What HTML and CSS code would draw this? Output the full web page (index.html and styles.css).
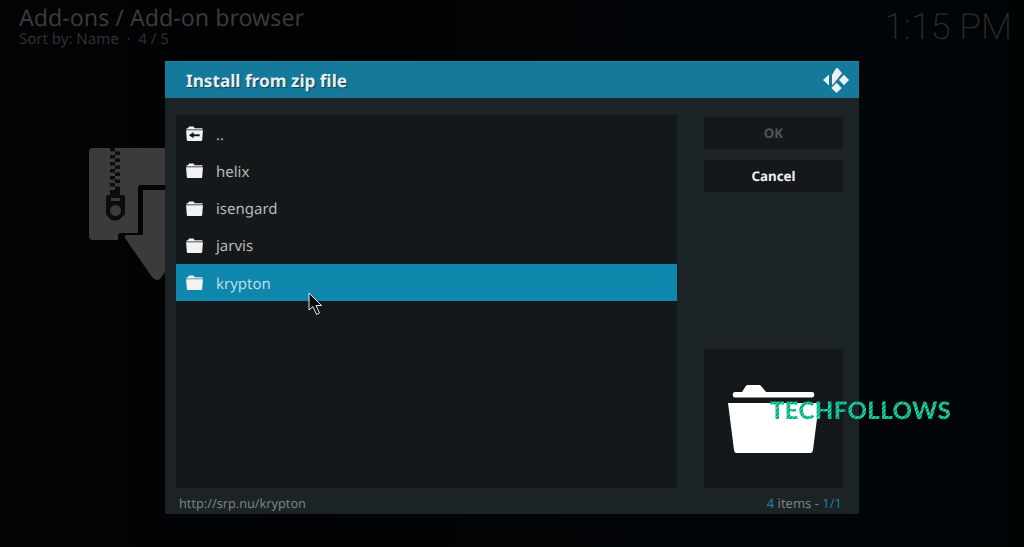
FILE: index.html
```html
<!DOCTYPE html>
<html lang="en">
<head>
<meta charset="utf-8">
<title>Install from zip file</title>
<link rel="stylesheet" href="styles.css">
</head>
<body>
<div class="screen">
  <header class="topbar">
    <div class="crumbs">
      <div class="crumb-title">Add-ons / Add-on browser</div>
      <div class="crumb-sub">Sort by: Name&nbsp; · &nbsp;4 / 5</div>
    </div>
    <div class="clock">1:15 PM</div>
  </header>

  <svg class="zip-art" viewBox="0 0 76 133" aria-hidden="true">
    <path fill="#3b3b3b" d="M4 0H76V37H52Q49 37 49 40V85H32Q29 85 29 88V92H4Q0 92 0 88V4Q0 0 4 0Z"/>
    <path fill="#3b3b3b" d="M56 42H76V124L71 131Q67 134 63 129L36 90Q35 87 38 87H54V42Z"/>
    <g fill="#0c0c0c">
      <path d="M21 0h5v3.500h-5zM26 3.500h5v3.500h-5zM21 7h5v3.500h-5zM26 10.500h5v3.500h-5zM21 14h5v3.500h-5zM26 17.500h5v3.500h-5zM21 21h5v3.500h-5zM26 24.500h5v3.500h-5zM21 28h5v3.500h-5zM26 31.500h5v3.500h-5zM21 35h5v3.500h-5zM26 38.500h5v3.500h-5z"/>
      <path d="M21 42h10v5H21z"/>
      <path fill-rule="evenodd" d="M17 49Q17 47 19 47H34Q36 47 36 49V66L31 71Q26 74 21 71L17 66ZM22 50V53H31V50ZM26.500 57A5.500 5.500 0 1 0 26.510 68 5.500 5.500 0 0 0 26.500 57Z"/>
    </g>
  </svg>

  <section class="dialog">
    <div class="dialog-head">
      <h1 class="dialog-title">Install from zip file</h1>
      <svg class="kodi-logo" viewBox="0 0 26 26" aria-hidden="true">
        <path d="M0 13 6 7.500V18.500Z"/>
        <path d="M9 17.500V8L13 1.500C13.500.8 14.300.8 15 1.300L19 6.200 9.500 18Z"/>
        <path d="M21 7.800 26 13 21 18.200 16 13Z"/>
        <path d="M13.500 15.800 18.700 21 13.500 26 8.300 21Z"/>
      </svg>
    </div>
    <div class="dialog-body">
      <ul class="file-list">
        <li class="file-row">
          <svg class="folder" viewBox="0 0 20 16" aria-hidden="true"><path fill-rule="evenodd" d="M3 2.500 4.200.6H9L10.200 2.500H18.500V3.600H1.500V2.500ZM1 4.600H19L18.200 15C18.100 15.600 17.800 16 17.200 16H2.800C2.200 16 1.900 15.600 1.800 15ZM4 9.800 9 6.500V8.800H15.500V10.800H9V13.100Z"/></svg>
          <span class="file-name">..</span>
        </li>
        <li class="file-row">
          <svg class="folder" viewBox="0 0 20 16" aria-hidden="true"><path d="M3 2.500 4.200.6H9L10.200 2.500H18.500V3.600H1.500V2.500ZM1 4.600H19L18.200 15C18.100 15.600 17.800 16 17.200 16H2.800C2.200 16 1.900 15.600 1.800 15Z"/></svg>
          <span class="file-name">helix</span>
        </li>
        <li class="file-row">
          <svg class="folder" viewBox="0 0 20 16" aria-hidden="true"><path d="M3 2.500 4.200.6H9L10.200 2.500H18.500V3.600H1.500V2.500ZM1 4.600H19L18.200 15C18.100 15.600 17.800 16 17.200 16H2.800C2.200 16 1.900 15.600 1.800 15Z"/></svg>
          <span class="file-name">isengard</span>
        </li>
        <li class="file-row">
          <svg class="folder" viewBox="0 0 20 16" aria-hidden="true"><path d="M3 2.500 4.200.6H9L10.200 2.500H18.500V3.600H1.500V2.500ZM1 4.600H19L18.200 15C18.100 15.600 17.800 16 17.200 16H2.800C2.200 16 1.900 15.600 1.800 15Z"/></svg>
          <span class="file-name">jarvis</span>
        </li>
        <li class="file-row is-selected">
          <svg class="folder" viewBox="0 0 20 16" aria-hidden="true"><path d="M3 2.500 4.200.6H9L10.200 2.500H18.500V3.600H1.500V2.500ZM1 4.600H19L18.200 15C18.100 15.600 17.800 16 17.200 16H2.800C2.200 16 1.900 15.600 1.800 15Z"/></svg>
          <span class="file-name">krypton</span>
        </li>
      </ul>
      <aside class="side">
        <div class="btn is-disabled">OK</div>
        <div class="btn">Cancel</div>
        <div class="thumb">
          <svg class="thumb-folder" viewBox="0 0 92 70" aria-hidden="true"><path d="M14 7 17.500 1.500C18 .6 19 0 20 0H31C32 0 33 .6 33.500 1.500L38 7H84C87 7 87 12.500 84 12.500H7C4 12.500 4 7 7 7ZM0 18H91L85 65C84.700 67.500 83.500 68 81.500 68H9.500C7.500 68 6.300 67.500 6 65Z"/></svg>
        </div>
      </aside>
    </div>
    <footer class="dialog-foot">
      <span class="path">http://srp.nu/krypton</span>
      <span class="count"><b>4</b> items - <b>1/1</b></span>
    </footer>
  </section>

  <svg class="cursor" viewBox="0 0 16 24" aria-hidden="true"><path d="M1 1V18L5 14.500 8.500 22.500 11.500 21 8 13.500H13.500Z" fill="#0b0b0b" stroke="#e8e8e8" stroke-width="1"/></svg>
  <div class="watermark">TECHFOLLOWS</div>
</div>
</body>
</html>
```
FILE: styles.css
```css
* { box-sizing: border-box; }
html, body { margin: 0; height: 100%; }
body {
  background: #000;
  font-family: "Noto Sans", sans-serif;
  text-rendering: geometricPrecision;
  overflow: hidden;
}
.screen {
  position: relative;
  width: 1024px;
  height: 547px;
  overflow: hidden;
  background: linear-gradient(90deg, #020405 0%, #010203 30%, #020608 80%, #010405 100%);
}
.topbar {
  display: flex;
  justify-content: space-between;
  padding: 0 12px 0 19px;
}
.crumb-title {
  font-size: 23.2px;
  line-height: 28px;
  color: #3a3a3a;
  margin-top: 3px;
}
.crumb-sub {
  font-size: 15px;
  line-height: 16px;
  color: #303030;
}
.clock {
  font-family: "Roboto", sans-serif;
  font-weight: 200;
  font-size: 36px;
  line-height: 42px;
  margin-top: 6px;
  color: #2c2c2c;
}
.zip-art {
  position: absolute;
  left: 89px;
  top: 148px;
  width: 76px;
  height: 133px;
}
.dialog {
  position: absolute;
  left: 165px;
  top: 61px;
  width: 694px;
  height: 453px;
  background: #1c2326;
  display: flex;
  flex-direction: column;
}
.dialog-head {
  height: 37px;
  background: #14799b;
  border-top: 1px solid #1a86a8;
  display: flex;
  align-items: center;
  justify-content: space-between;
  padding: 0 10px 0 21px;
}
.dialog-title {
  margin: 2px 0 0;
  font-size: 17.2px;
  font-weight: 700;
  color: #e8eef0;
  text-shadow: 1px 1px 1px rgba(0, 0, 0, .45);
}
.kodi-logo {
  width: 26px;
  height: 26px;
  fill: #e9f1f4;
}
.dialog-body {
  display: flex;
  flex: 1;
  padding: 17px 16px 0 11px;
  gap: 27px;
}
.file-list {
  list-style: none;
  margin: 0;
  padding: 0;
  width: 501px;
  height: 373px;
  background: #14181a;
}
.file-row {
  display: flex;
  align-items: center;
  height: 37.25px;
  padding-left: 9px;
  gap: 12px;
  font-size: 15px;
  color: #b8b8b8;
}
.file-name {
  margin-top: 2px;
}
.file-row.is-selected {
  background: #0f86ab;
  color: #b9dce8;
}
.folder {
  width: 19px;
  height: 15px;
  fill: #f2f2f2;
  flex: none;
}
.side {
  display: flex;
  flex-direction: column;
  width: 139px;
  padding-top: 2px;
  gap: 11px;
}
.btn {
  height: 32px;
  background: #14181a;
  border-radius: 2px;
  color: #f0f0f0;
  font-size: 13.3px;
  font-weight: 700;
  display: flex;
  align-items: center;
  justify-content: center;
}
.btn.is-disabled {
  color: #505455;
}
.thumb {
  margin-top: auto;
  height: 139px;
  background: #14181a;
  display: flex;
  align-items: center;
  justify-content: center;
}
.thumb-folder {
  width: 92px;
  height: 70px;
  fill: #fff;
  margin-top: 3px;
}
.dialog-foot {
  height: 26px;
  padding: 4px 17px 0 14px;
  display: flex;
  justify-content: space-between;
  align-items: center;
  font-size: 12.7px;
  color: #7c8182;
}
.count {
  font-size: 13px;
}
.count b {
  font-weight: 400;
  color: #1a7d9f;
}
.cursor {
  position: absolute;
  left: 308px;
  top: 292px;
  width: 16px;
  height: 24px;
}
.watermark {
  position: absolute;
  left: 770px;
  top: 397px;
  font-family: "Lato", sans-serif;
  font-weight: 900;
  font-size: 24px;
  line-height: 28px;
  letter-spacing: .35px;
  color: transparent;
  background: repeating-linear-gradient(135deg, #22d3a8 0 1.5px, #0d9f7c 1.5px 3px);
  -webkit-background-clip: text;
  background-clip: text;
}
```
